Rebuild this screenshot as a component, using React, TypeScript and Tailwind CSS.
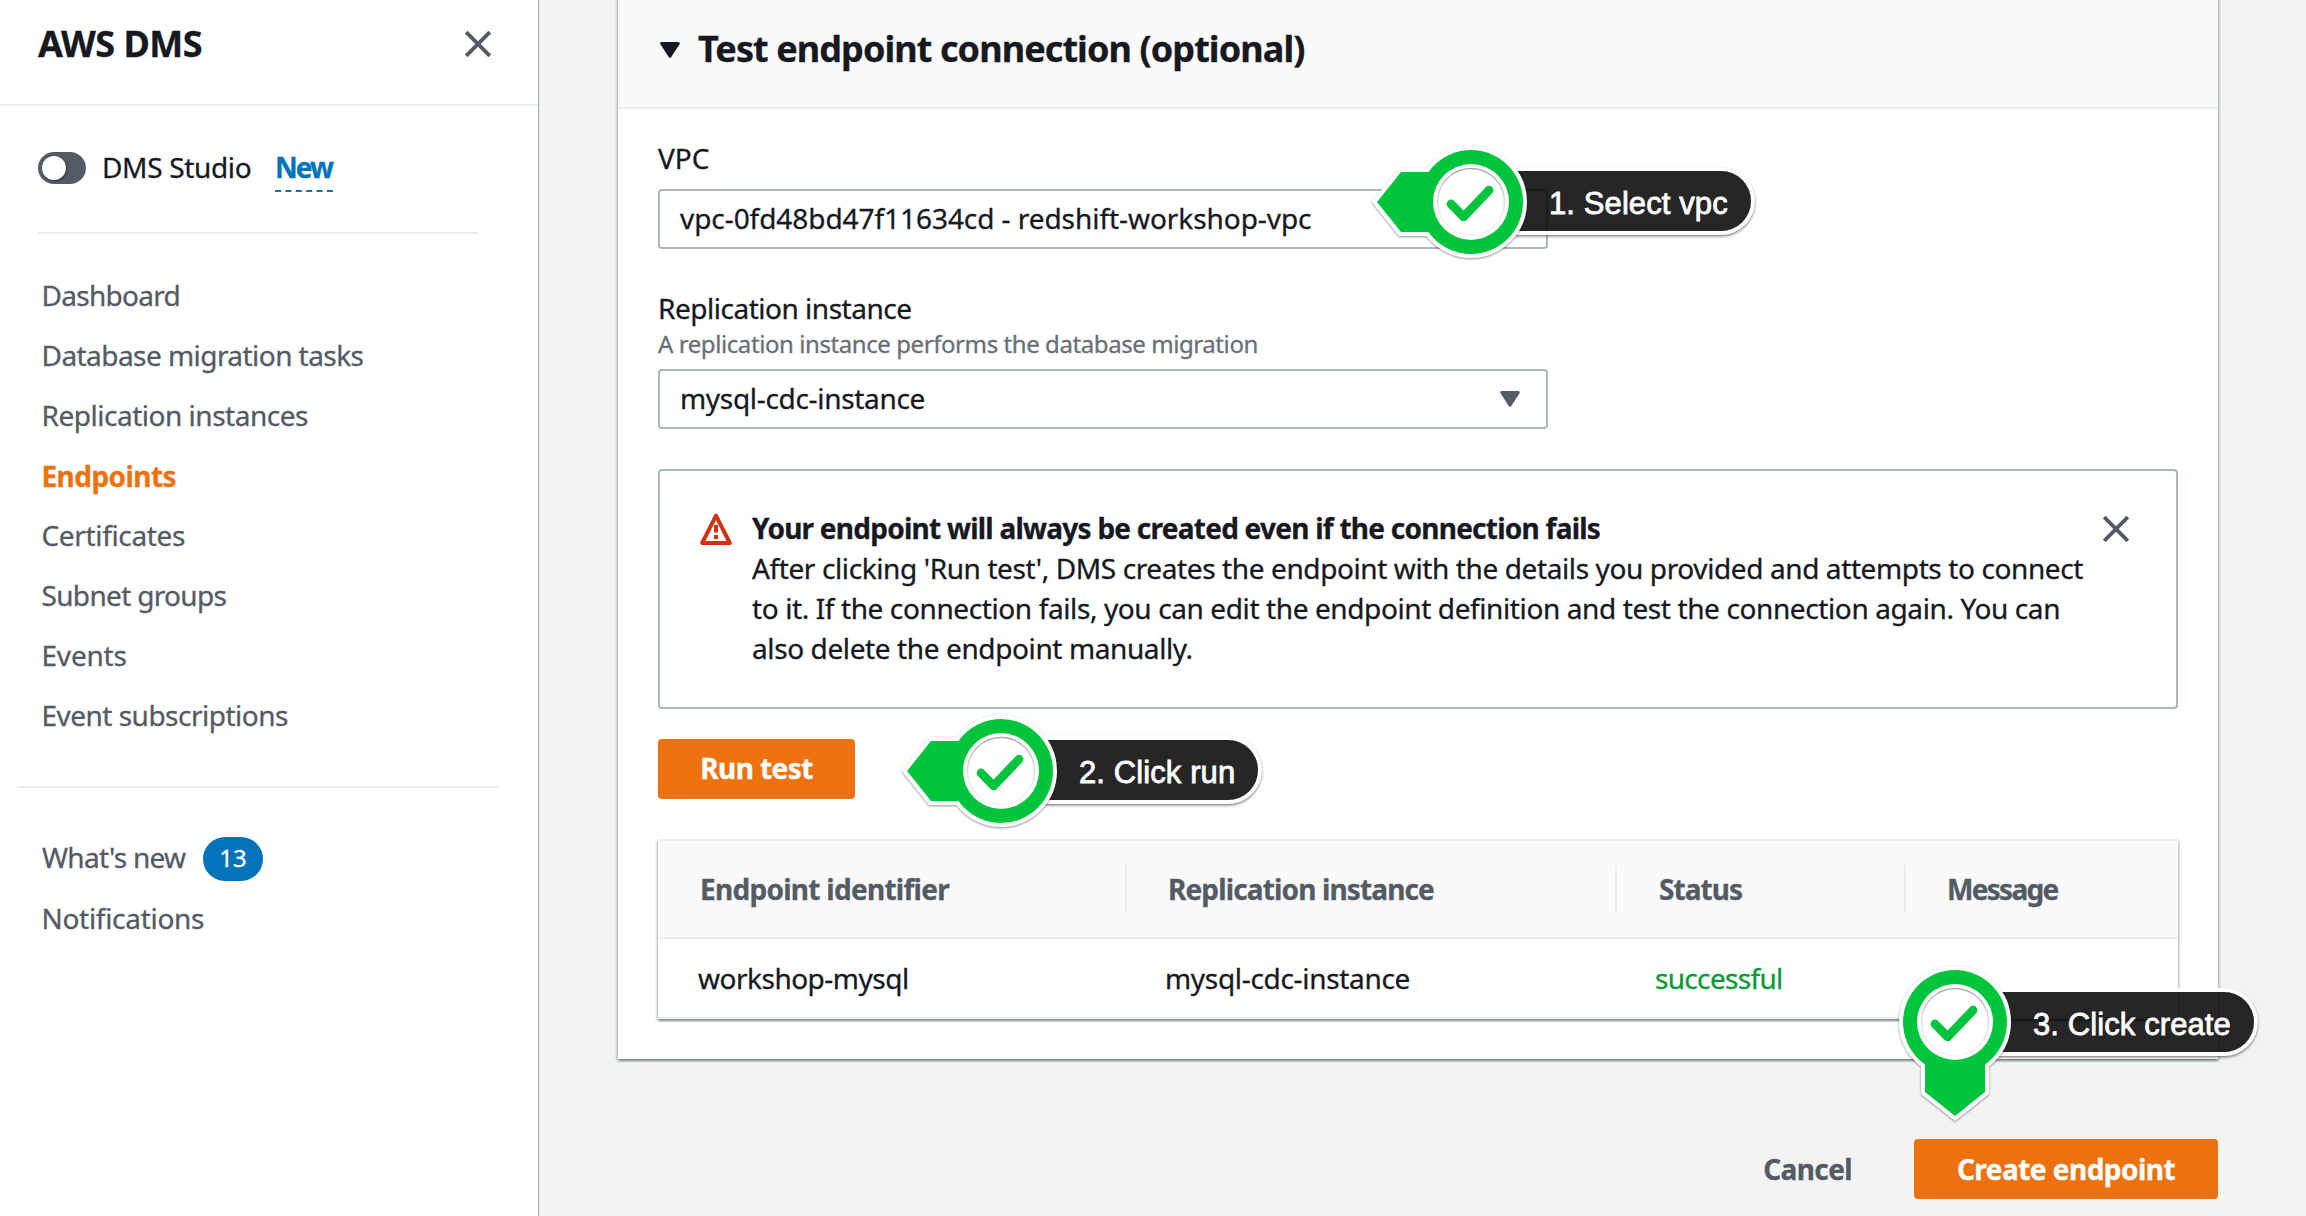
import React from "react";

function CloseIcon({ className = "" }: { className?: string }) {
  return (
    <svg className={className} width="28" height="28" viewBox="0 0 28 28" fill="none" stroke="#545b64" strokeWidth="3.8">
      <path d="M2.2 2.2 25.8 25.8M25.8 2.2 2.2 25.8" />
    </svg>
  );
}

function CaretDown({ className = "" }: { className?: string }) {
  return (
    <svg className={className} width="20" height="16" viewBox="0 0 20 16" fill="currentColor" stroke="currentColor" strokeWidth="3" strokeLinejoin="round">
      <path d="M1.7 1.5h16.6L10 14.3z" />
    </svg>
  );
}

function WarningIcon({ className = "" }: { className?: string }) {
  return (
    <svg className={className} width="32" height="32" viewBox="0 0 32 32" fill="none" stroke="#d13212" strokeWidth="4" strokeLinejoin="round">
      <path d="M16 2.6 29.8 30H2.2z" />
      <path d="M16 12v7.4M16 22v4" />
    </svg>
  );
}

function Callout({
  position,
  labelClass,
  direction,
  text,
}: {
  position: string;
  labelClass: string;
  direction: "left" | "down";
  text: string;
}) {
  const pointer = "M0-30H-70L-94 0L-70 30H0z";
  const turn = direction === "down" ? "rotate(-90)" : undefined;
  return (
    <div className={`absolute size-0 ${position}`}>
      <div
        className={`absolute left-[44px] h-[60px] rounded-r-full bg-black/85 pt-[3px] text-[31px] leading-[60px] whitespace-nowrap text-white shadow-[0_0_0_4px_#fff,0_1px_2px_4px_rgba(0,0,0,0.3),0_2px_3px_4px_rgba(0,0,0,0.25)] [-webkit-text-stroke:0.8px_white] [font-family:'Liberation_Sans',sans-serif] ${labelClass}`}
      >
        {text}
      </div>
      <svg className="absolute top-[-110px] left-[-110px]" width="220" height="220" viewBox="-110 -110 220 220">
        <defs>
          <linearGradient id={`rim-${direction}`} x1="0" y1="0" x2="0" y2="1">
            <stop offset="0" stopColor="#a9a9a9" />
            <stop offset="0.5" stopColor="#dddddd" />
            <stop offset="1" stopColor="#f4f4f4" />
          </linearGradient>
        </defs>
        <g fill="#fff" stroke="#fff" strokeWidth="8" className="[filter:drop-shadow(0_1.5px_1.2px_rgba(0,0,0,0.42))]">
          <path d={pointer} transform={turn} />
          <circle r="52" />
        </g>
        <g fill="#00c53c">
          <path d={pointer} transform={turn} />
          <circle r="52" />
        </g>
        <circle r="38" fill="#fff" />
        <circle r="33.5" fill="#fff" stroke={`url(#rim-${direction})`} strokeWidth="1.4" />
        <path d="M-20 2-7.3 14.8 18-11.8" fill="none" stroke="#00c53c" strokeWidth="8.8" strokeLinecap="round" strokeLinejoin="round" />
      </svg>
    </div>
  );
}

const navItems = [
  { label: "Dashboard", cls: "tracking-[-0.72px]" },
  { label: "Database migration tasks", cls: "tracking-[-0.55px]" },
  { label: "Replication instances", cls: "tracking-[-0.48px]" },
  { label: "Endpoints", cls: "font-bold text-[#ec7211] tracking-[-0.56px] pt-px" },
  { label: "Certificates", cls: "tracking-[-0.34px]" },
  { label: "Subnet groups", cls: "tracking-[-0.67px]" },
  { label: "Events", cls: "tracking-[-0.2px]" },
  { label: "Event subscriptions", cls: "tracking-[-0.51px]" },
];

const columns = [
  { label: "Endpoint identifier", cls: "pl-[42px] tracking-[-0.72px]" },
  { label: "Replication instance", cls: "pl-[41px] tracking-[-0.86px]" },
  { label: "Status", cls: "pl-[42px] tracking-[-0.94px]" },
  { label: "Message", cls: "pl-[41px] tracking-[-1.7px]" },
];

function Sidebar() {
  return (
    <aside className="relative w-[538px] shrink-0 bg-white shadow-[1px_0_1px_0_rgba(0,28,36,0.3)]">
      <header className="flex h-[106px] items-start justify-between border-b-2 border-[#eaeded] pr-[46px] pl-[38px]">
        <h2 className="mt-[22px] text-[36px] leading-[44px] font-bold tracking-[-0.5px]">AWS DMS</h2>
        <CloseIcon className="mt-[30px]" />
      </header>
      <div className="mr-[60px] ml-[38px] flex items-start border-b-2 border-[#eaeded] pt-[41px] pb-10">
        <span className="mt-[5px] flex h-8 w-12 items-center rounded-full bg-[#545b64] pl-1">
          <span className="size-6 rounded-full bg-white shadow-[1px_1px_2px_rgba(0,0,0,0.45)]" />
        </span>
        <span className="ml-4 w-[173px] leading-10 tracking-[-0.33px]">DMS Studio</span>
        <span className="w-[58px] border-b-2 border-dashed border-[#0073bb] pb-[3px] leading-10 font-bold tracking-[-1.9px] text-[#0073bb]">
          New
        </span>
      </div>
      <nav className="mt-[31px] pl-[41.5px] text-[#545b64]">
        {navItems.map((n) => (
          <a key={n.label} className={`flex h-[60px] items-center leading-10 ${n.cls}`}>
            {n.label}
          </a>
        ))}
      </nav>
      <hr className="mt-[41px] mr-[40px] ml-[18px] border-t-2 border-[#eaeded]" />
      <div className="mt-[49px] flex items-start pl-[42px] text-[#545b64]">
        <span className="w-[161px] leading-10 tracking-[-0.7px]">What's new</span>
        <span className="h-11 w-[60px] rounded-[22px] bg-[#0073bb] text-center text-[24px] leading-[42px] text-white">13</span>
      </div>
      <div className="mt-[17px] pl-[41.5px] leading-10 tracking-[-0.3px] text-[#545b64]">Notifications</div>
    </aside>
  );
}

export default function App() {
  return (
    <div className="relative flex h-[1216px] w-[2306px] overflow-hidden bg-[#f2f3f3] text-[28px] whitespace-nowrap text-[#16191f] [-webkit-text-stroke:0.3px_currentColor] [font-family:'Noto_Sans',sans-serif]">
      <Sidebar />
      <main className="-mt-2 ml-20 w-[1600px]">
        <section className="bg-white shadow-[0_2px_2px_0_rgba(0,28,36,0.3),2px_2px_2px_0_rgba(0,28,36,0.15),-2px_2px_2px_0_rgba(0,28,36,0.15)]">
          <header className="flex h-[117px] items-start border-b-2 border-[#eaeded] bg-[#fafafa] pt-2 pl-[42px]">
            <CaretDown className="mt-[42px]" />
            <h2 className="mt-[27px] ml-[18px] text-[36px] leading-[44px] font-bold tracking-[-0.92px]">
              Test endpoint connection (optional)
            </h2>
          </header>
          <div className="px-10 pt-[29px] pb-10">
            <div className="leading-10">VPC</div>
            <div className="mt-[11px] h-[60px] w-[890px] rounded-[4px] border-2 border-[#aab7b8] pl-5 leading-[54px] tracking-[-0.06px]">
              vpc-0fd48bd47f11634cd - redshift-workshop-vpc
            </div>
            <div className="mt-[39px] leading-10 tracking-[-0.48px]">Replication instance</div>
            <div className="text-[24px] leading-8 tracking-[-0.42px] text-[#687078]">
              A replication instance performs the database migration
            </div>
            <div className="mt-[9px] flex h-[60px] w-[890px] items-center justify-between rounded-[4px] border-2 border-[#aab7b8] pr-[26px] pl-5">
              <span className="-mt-0.5 leading-[56px] tracking-[-0.32px]">mysql-cdc-instance</span>
              <CaretDown className="text-[#545b64]" />
            </div>

            <div className="mt-10 flex h-[240px] items-start rounded-[4px] border-2 border-[#aab7b8] pr-[46px] pl-10">
              <WarningIcon className="mt-[42px]" />
              <div className="mt-[37px] ml-5 flex-1 leading-10">
                <div className="font-bold tracking-[-0.75px]">Your endpoint will always be created even if the connection fails</div>
                <p className="tracking-[-0.39px]">
                  After clicking 'Run test', DMS creates the endpoint with the details you provided and attempts to connect
                  <br />
                  to it. If the connection fails, you can edit the endpoint definition and test the connection again. You can
                  <br />
                  also delete the endpoint manually.
                </p>
              </div>
              <CloseIcon className="mt-[44px]" />
            </div>

            <button className="mt-[30px] block h-[60px] w-[197px] rounded-[4px] bg-[#ec7211] pb-px text-center leading-[59px] font-bold tracking-[-0.57px] text-white">
              Run test
            </button>

            <div className="mt-10 border-y-2 border-[#eaeded] shadow-[0_2px_2px_0_rgba(0,28,36,0.3),2px_2px_2px_0_rgba(0,28,36,0.15),-2px_2px_2px_0_rgba(0,28,36,0.15)]">
              <div className="grid h-[98px] grid-cols-[469px_490px_289px_1fr] items-start border-b-2 border-[#eaeded] bg-[#fafafa] pt-6 font-bold text-[#545b64]">
                {columns.map((c) => (
                  <div key={c.label} className={`h-12 border-r-2 border-[#eaeded] leading-[48px] last:border-r-0 ${c.cls}`}>
                    {c.label}
                  </div>
                ))}
              </div>
              <div className="grid h-[78px] grid-cols-[469px_490px_289px_1fr] items-center leading-10">
                <div className="pl-10 tracking-[-0.5px]">workshop-mysql</div>
                <div className="pl-[38px] tracking-[-0.32px]">mysql-cdc-instance</div>
                <div className="pl-[38px] tracking-[-0.68px] text-[#079a34]">successful</div>
                <div />
              </div>
            </div>
          </div>
        </section>

        <div className="mt-20 flex justify-end leading-[60px] font-bold">
          <span className="mr-[62px] tracking-[-0.62px] text-[#545b64]">Cancel</span>
          <button className="h-[60px] w-[304px] rounded-[4px] bg-[#ec7211] tracking-[-0.53px] text-white">Create endpoint</button>
        </div>
      </main>

      <Callout position="left-[1471px] top-[202px]" labelClass="top-[-31px] w-[236px] pl-[34px] tracking-[0.1px]" direction="left" text="1. Select vpc" />
      <Callout position="left-[1001px] top-[771px]" labelClass="top-[-31px] w-[213px] pl-[34px] tracking-[0.1px]" direction="left" text="2. Click run" />
      <Callout position="left-[1955px] top-[1022px]" labelClass="top-[-30px] w-[255px] pl-[34px] tracking-[0.1px]" direction="down" text="3. Click create" />
    </div>
  );
}
